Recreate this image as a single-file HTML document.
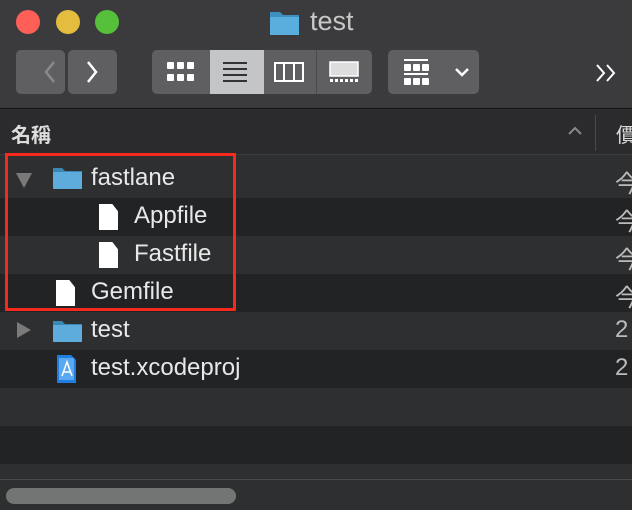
<!DOCTYPE html>
<html><head><meta charset="utf-8"><style>
*{margin:0;padding:0;box-sizing:border-box}
body{width:632px;height:510px;background:#2e2f31;overflow:hidden;position:relative;font-family:"Liberation Sans","Noto Sans CJK JP",sans-serif;color:#e6e6e6}
.abs{position:absolute}
.tb{left:0;top:0;width:632px;height:109px;background:#3b3b3d;border-bottom:1px solid #111}
.dot{width:24px;height:24px;border-radius:50%;top:10px}
.btn{background:#5f5f61;border-radius:5px;height:44px;top:50px}
.hdr{left:0;top:110px;width:632px;height:45px;background:#2b2b2d;border-bottom:1px solid #3c3c3e}
.row{left:0;width:632px;height:38px}
.l{background:#2e2f31}.d{background:#222325}
.t{font-size:24px;color:#e8e8e8;position:absolute}
.doc{position:absolute;width:19px;height:26px;background:#fff;clip-path:polygon(0 0,70% 0,100% 28%,100% 100%,0 100%)}
.fold{position:absolute;width:31px;height:22px}
</style></head><body>
<div class="abs tb"></div>
<div class="abs dot" style="left:16px;background:#fe5f57"></div>
<div class="abs dot" style="left:56px;background:#e5bd3e"></div>
<div class="abs dot" style="left:95px;background:#56c03a"></div>
<svg class="abs" style="left:268px;top:9px" width="34" height="28"><path d="M2 3h10l3 3h16v20H2z" fill="#3d8fbf"/><rect x="2" y="8" width="29" height="18" fill="#5aaedd"/></svg>
<div class="abs" style="left:310px;top:6px;font-size:27px;color:#c8c8c8">test</div>
<div class="abs btn" style="left:16px;width:49px"></div>
<div class="abs btn" style="left:68px;width:49px"></div>
<svg class="abs" style="left:16px;top:50px" width="101" height="44"><path d="M38 12l-8 10 8 10" stroke="#8a8a8a" stroke-width="2.5" fill="none"/><path d="M72 12l8 10-8 10" stroke="#fff" stroke-width="2.5" fill="none"/></svg>
<div class="abs btn" style="left:152px;width:220px"></div>
<div class="abs" style="left:210px;top:50px;width:54px;height:44px;background:#c4c5c6"></div>
<div class="abs" style="left:316px;top:50px;width:1px;height:44px;background:#4a4a4c"></div>
<svg class="abs" style="left:152px;top:50px" width="220" height="44">
<g fill="#fff"><rect x="15" y="12" width="7" height="7" rx="1"/><rect x="25" y="12" width="7" height="7" rx="1"/><rect x="35" y="12" width="7" height="7" rx="1"/><rect x="15" y="24" width="7" height="7" rx="1"/><rect x="25" y="24" width="7" height="7" rx="1"/><rect x="35" y="24" width="7" height="7" rx="1"/></g>
<g fill="#333"><rect x="71" y="12" width="24" height="2"/><rect x="71" y="18" width="24" height="2"/><rect x="71" y="24" width="24" height="2"/><rect x="71" y="30" width="24" height="2"/></g>
<g stroke="#fff" stroke-width="2" fill="none"><rect x="123" y="13" width="28" height="18"/><path d="M132 13v18M142 13v18"/></g>
<rect x="178" y="12" width="28" height="14" fill="#ddd" stroke="#fff" stroke-width="1.5"/><g fill="#fff"><rect x="178" y="29" width="3" height="3"/><rect x="183" y="29" width="3" height="3"/><rect x="188" y="29" width="3" height="3"/><rect x="193" y="29" width="3" height="3"/><rect x="198" y="29" width="3" height="3"/><rect x="203" y="29" width="3" height="3"/></g>
</svg>
<div class="abs btn" style="left:388px;width:91px"></div>
<svg class="abs" style="left:388px;top:50px" width="91" height="44"><g fill="#fff"><rect x="16" y="9" width="24" height="2"/><rect x="16" y="14" width="7" height="7" rx="1"/><rect x="25" y="14" width="7" height="7" rx="1"/><rect x="34" y="14" width="7" height="7" rx="1"/><rect x="16" y="23" width="24" height="2"/><rect x="16" y="28" width="7" height="7" rx="1"/><rect x="25" y="28" width="7" height="7" rx="1"/><rect x="34" y="28" width="7" height="7" rx="1"/></g><path d="M68 19l6 6 6-6" stroke="#fff" stroke-width="2.5" fill="none"/></svg>
<svg class="abs" style="left:594px;top:62px" width="30" height="22"><path d="M3 3l7 8-7 8M13 3l7 8-7 8" stroke="#fff" stroke-width="2" fill="none"/></svg>
<div class="abs hdr"></div>
<div class="abs" style="left:11px;top:119px;font-size:20px;font-weight:bold;color:#ddd">名稱</div>
<svg class="abs" style="left:566px;top:124px" width="18" height="14"><path d="M3 10l6-6 6 6" stroke="#888" stroke-width="2" fill="none"/></svg>
<div class="abs" style="left:595px;top:115px;width:1px;height:36px;background:#4a4a4c"></div>
<div class="abs" style="left:616px;top:119px;font-size:20px;color:#ddd">價</div>
<div class="abs row l" style="top:160px"></div>
<div class="abs row d" style="top:198px"></div>
<div class="abs row l" style="top:236px"></div>
<div class="abs row d" style="top:274px"></div>
<div class="abs row l" style="top:312px"></div>
<div class="abs row d" style="top:350px"></div>
<div class="abs row l" style="top:388px"></div>
<div class="abs row d" style="top:426px"></div>
<div class="abs" style="left:0;top:479px;width:632px;height:1px;background:#48494b"></div>
<div class="abs" style="left:6px;top:488px;width:230px;height:16px;border-radius:8px;background:#737574"></div>
<svg class="abs" style="left:14px;top:170px" width="20" height="20"><path d="M2 3h16l-8 15z" fill="#7a7a7a"/></svg>
<svg class="abs" style="left:14px;top:320px" width="20" height="20"><path d="M3 2v16l14-8z" fill="#7a7a7a"/></svg>
<svg class="fold" style="left:52px;top:167px" viewBox="0 0 31 22"><path d="M1 1h9l3 3h17v18H1z" fill="#3a86b5"/><rect x="1" y="5" width="29" height="17" rx="1" fill="#5dacdc"/></svg>
<svg class="fold" style="left:52px;top:320px" viewBox="0 0 31 22"><path d="M1 1h9l3 3h17v18H1z" fill="#3a86b5"/><rect x="1" y="5" width="29" height="17" rx="1" fill="#5dacdc"/></svg>
<div class="t" style="left:91px;top:164px">fastlane</div>
<div class="doc" style="left:99px;top:204px"></div><div class="t" style="left:134px;top:202px">Appfile</div>
<div class="doc" style="left:99px;top:242px"></div><div class="t" style="left:134px;top:240px">Fastfile</div>
<div class="doc" style="left:56px;top:280px"></div><div class="t" style="left:91px;top:278px">Gemfile</div>
<div class="t" style="left:91px;top:316px">test</div>
<svg class="abs" style="left:56px;top:354px" width="22" height="30"><path d="M1 1h14l5 5v23H1z" fill="#1f7ee0"/><rect x="3" y="4" width="15" height="22" fill="#5aa8f0"/><path d="M6 22l5-14 5 14M7 18h8" stroke="#fff" stroke-width="1.5" fill="none"/></svg>
<div class="t" style="left:91px;top:354px">test.xcodeproj</div>
<div class="t" style="left:615px;top:164px;color:#bbb">今</div>
<div class="t" style="left:615px;top:202px;color:#bbb">今</div>
<div class="t" style="left:615px;top:240px;color:#bbb">今</div>
<div class="t" style="left:615px;top:278px;color:#bbb">今</div>
<div class="t" style="left:615px;top:316px;color:#bbb">2</div>
<div class="t" style="left:615px;top:354px;color:#bbb">2</div>
<div class="abs" style="left:5px;top:153px;width:231px;height:158px;border:3px solid #f52a1c"></div>
</body></html>
